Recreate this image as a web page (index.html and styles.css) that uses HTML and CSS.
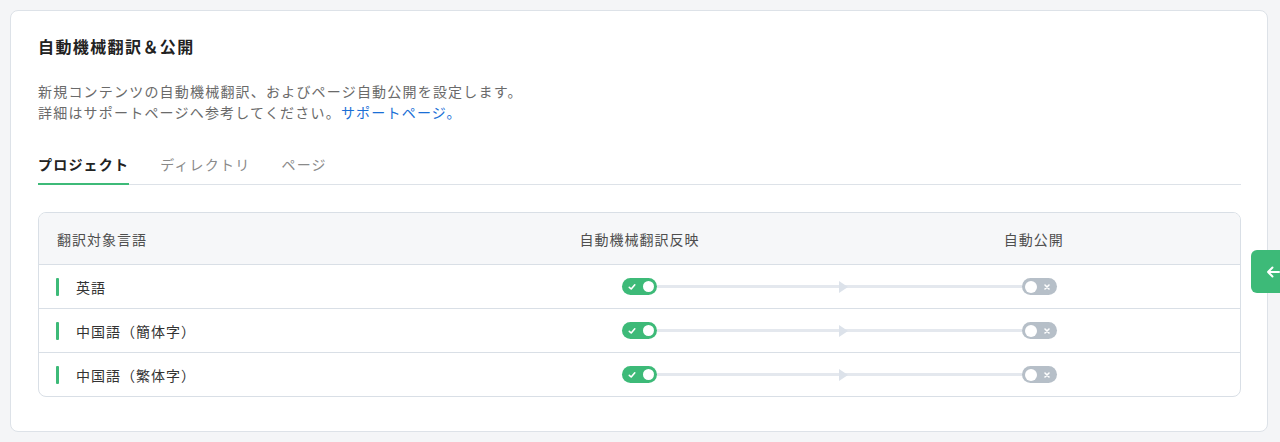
FILE: index.html
```html
<!DOCTYPE html>
<html lang="ja">
<head>
<meta charset="utf-8">
<title>自動機械翻訳＆公開</title>
<link rel="stylesheet" href="styles.css">
</head>
<body>
<section class="card">
  <h2 class="title">自動機械翻訳＆公開</h2>
  <p class="desc">新規コンテンツの自動機械翻訳、およびページ自動公開を設定します。<br>詳細はサポートページへ参考してください。<a class="link" href="#">サポートページ。</a></p>
  <nav class="tabs">
    <span class="tab active">プロジェクト</span>
    <span class="tab">ディレクトリ</span>
    <span class="tab">ページ</span>
  </nav>
  <div class="table">
    <div class="row head">
      <div class="cell lang-head">翻訳対象言語</div>
      <div class="cell center">自動機械翻訳反映</div>
      <div class="cell center last-head">自動公開</div>
    </div>
    <div class="row">
      <div class="cell lang"><span class="bar"></span><span>英語</span></div>
      <div class="cell flow-a"><span class="spacer"></span><span class="toggle on"><svg class="mark" viewBox="0 0 8 8" width="8" height="8"><path d="M1.3 4.3 L3.2 6 L6.8 1.8" fill="none" stroke="#fff" stroke-width="1.6" stroke-linecap="round" stroke-linejoin="round"/></svg><span class="knob"></span></span><span class="line"></span></div>
      <div class="cell flow-b"><span class="line arrow"><span class="tri"></span></span><span class="toggle off"><span class="knob"></span><svg class="mark" viewBox="0 0 8 8" width="8" height="8"><path d="M2 2 L6 6 M6 2 L2 6" stroke="#fff" stroke-width="1.6" stroke-linecap="round"/></svg></span><span class="spacer"></span></div>
    </div>
    <div class="row">
      <div class="cell lang"><span class="bar"></span><span>中国語（簡体字）</span></div>
      <div class="cell flow-a"><span class="spacer"></span><span class="toggle on"><svg class="mark" viewBox="0 0 8 8" width="8" height="8"><path d="M1.3 4.3 L3.2 6 L6.8 1.8" fill="none" stroke="#fff" stroke-width="1.6" stroke-linecap="round" stroke-linejoin="round"/></svg><span class="knob"></span></span><span class="line"></span></div>
      <div class="cell flow-b"><span class="line arrow"><span class="tri"></span></span><span class="toggle off"><span class="knob"></span><svg class="mark" viewBox="0 0 8 8" width="8" height="8"><path d="M2 2 L6 6 M6 2 L2 6" stroke="#fff" stroke-width="1.6" stroke-linecap="round"/></svg></span><span class="spacer"></span></div>
    </div>
    <div class="row">
      <div class="cell lang"><span class="bar"></span><span>中国語（繁体字）</span></div>
      <div class="cell flow-a"><span class="spacer"></span><span class="toggle on"><svg class="mark" viewBox="0 0 8 8" width="8" height="8"><path d="M1.3 4.3 L3.2 6 L6.8 1.8" fill="none" stroke="#fff" stroke-width="1.6" stroke-linecap="round" stroke-linejoin="round"/></svg><span class="knob"></span></span><span class="line"></span></div>
      <div class="cell flow-b"><span class="line arrow"><span class="tri"></span></span><span class="toggle off"><span class="knob"></span><svg class="mark" viewBox="0 0 8 8" width="8" height="8"><path d="M2 2 L6 6 M6 2 L2 6" stroke="#fff" stroke-width="1.6" stroke-linecap="round"/></svg></span><span class="spacer"></span></div>
    </div>
  </div>
</section>
<button class="side-btn" type="button" aria-label="戻る"><svg viewBox="0 0 16 16" width="16" height="16"><path d="M14 8 H3 M7.5 3.5 L3 8 L7.5 12.5" fill="none" stroke="#fff" stroke-width="2" stroke-linecap="round" stroke-linejoin="round"/></svg></button>
</body>
</html>
```

FILE: styles.css
```css
* { box-sizing: border-box; }

html, body {
  margin: 0;
  height: 100%;
}

body {
  background: #f4f5f7;
  padding: 10px 12px 10px 10px;
  font-family: "Noto Sans CJK JP", "Noto Sans", sans-serif;
  color: #333;
  overflow: hidden;
}

.card {
  background: #fff;
  border: 1px solid #dde2e8;
  border-radius: 8px;
  padding: 23px 26px 34px 27px;
}

.title {
  margin: 0;
  font-size: 16px;
  line-height: 24px;
  font-weight: 700;
  letter-spacing: 1.4px;
  color: #222;
}

.desc {
  margin: 23px 0 0;
  font-size: 14px;
  line-height: 21px;
  letter-spacing: 1.2px;
  color: #6a6a6a;
}

.link {
  color: #1a6fd6;
  text-decoration: none;
}

.tabs {
  margin-top: 31px;
  display: flex;
  gap: 31px;
  border-bottom: 1px solid #dde2e8;
}

.tab {
  font-size: 14px;
  line-height: 20px;
  letter-spacing: 1.2px;
  color: #8a8a8a;
  padding-bottom: 9px;
  border-bottom: 2px solid transparent;
  margin-bottom: -1px;
}

.tab.active {
  color: #222;
  font-weight: 700;
  border-bottom-color: #3dba78;
}

.table {
  margin-top: 27px;
  border: 1px solid #d9dfe6;
  border-radius: 8px;
  overflow: hidden;
}

.row {
  display: grid;
  grid-template-columns: 1fr 1fr 1fr;
  height: 44px;
  border-top: 1px solid #d9dfe6;
}

.row.head {
  height: 51px;
  border-top: none;
  background: #f6f7f9;
}

.cell {
  display: flex;
  align-items: center;
  font-size: 14px;
  letter-spacing: 1px;
}

.head .cell {
  color: #4f4f4f;
}

.lang-head {
  padding-left: 18px;
}

.center {
  justify-content: center;
}

.last-head {
  padding-right: 12px;
}

.lang {
  padding-left: 17px;
  color: #333;
  gap: 17px;
}

.bar {
  width: 3px;
  height: 18px;
  background: #3dba78;
  border-radius: 1px;
}

.spacer,
.line {
  flex: 1;
}

.line {
  height: 3px;
  background: #e4e8ee;
  display: flex;
  align-items: center;
}

.tri {
  width: 0;
  height: 0;
  border-top: 6px solid transparent;
  border-bottom: 6px solid transparent;
  border-left: 9px solid #dce2ea;
  margin-left: -1px;
}

.toggle {
  width: 35px;
  height: 17px;
  border-radius: 9px;
  display: flex;
  align-items: center;
  justify-content: space-between;
  padding: 0 3px 0 6px;
  flex: none;
}

.toggle.on {
  background: #3dba78;
}

.toggle.off {
  background: #b6bfc8;
  padding: 0 6px 0 3px;
}

.knob {
  width: 11px;
  height: 11px;
  border-radius: 50%;
  background: #fff;
}

.toggle.off .knob {
  width: 12px;
  height: 12px;
}

.mark {
  display: block;
}

.side-btn {
  position: fixed;
  top: 250px;
  right: -12px;
  width: 41px;
  height: 43px;
  border: none;
  border-radius: 6px;
  background: #3dba78;
  padding: 0 0 0 14px;
  display: flex;
  align-items: center;
  justify-content: flex-start;
}

.side-btn svg {
  display: block;
}
```
